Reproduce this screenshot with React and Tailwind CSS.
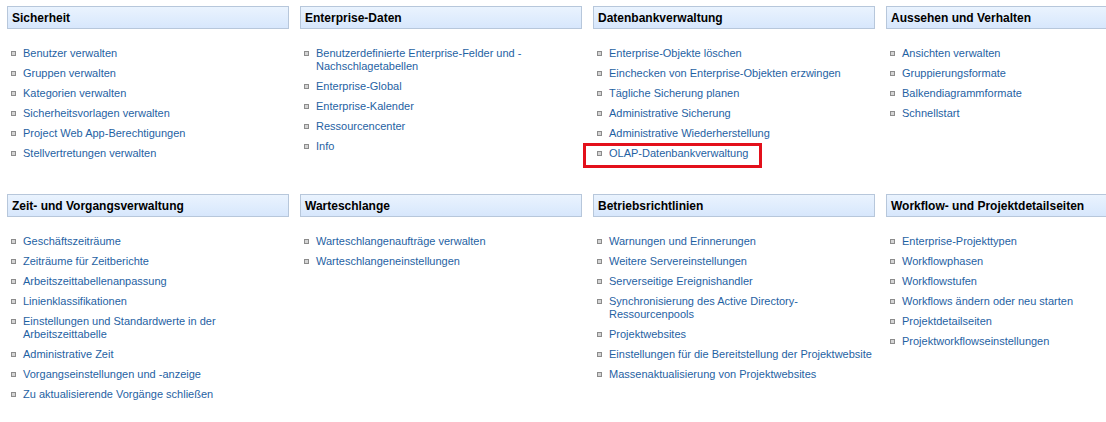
import React from "react";

const sections = [
  {
    title: "Sicherheit",
    items: [
      "Benutzer verwalten",
      "Gruppen verwalten",
      "Kategorien verwalten",
      "Sicherheitsvorlagen verwalten",
      "Project Web App-Berechtigungen",
      "Stellvertretungen verwalten",
    ],
  },
  {
    title: "Enterprise-Daten",
    items: [
      ["Benutzerdefinierte Enterprise-Felder und -", "Nachschlagetabellen"],
      "Enterprise-Global",
      "Enterprise-Kalender",
      "Ressourcencenter",
      "Info",
    ],
  },
  {
    title: "Datenbankverwaltung",
    items: [
      "Enterprise-Objekte löschen",
      "Einchecken von Enterprise-Objekten erzwingen",
      "Tägliche Sicherung planen",
      "Administrative Sicherung",
      "Administrative Wiederherstellung",
      { text: "OLAP-Datenbankverwaltung", marked: true },
    ],
  },
  {
    title: "Aussehen und Verhalten",
    items: ["Ansichten verwalten", "Gruppierungsformate", "Balkendiagrammformate", "Schnellstart"],
  },
  {
    title: "Zeit- und Vorgangsverwaltung",
    items: [
      "Geschäftszeiträume",
      "Zeiträume für Zeitberichte",
      "Arbeitszeittabellenanpassung",
      "Linienklassifikationen",
      ["Einstellungen und Standardwerte in der", "Arbeitszeittabelle"],
      "Administrative Zeit",
      "Vorgangseinstellungen und -anzeige",
      "Zu aktualisierende Vorgänge schließen",
    ],
  },
  {
    title: "Warteschlange",
    items: ["Warteschlangenaufträge verwalten", "Warteschlangeneinstellungen"],
  },
  {
    title: "Betriebsrichtlinien",
    items: [
      "Warnungen und Erinnerungen",
      "Weitere Servereinstellungen",
      "Serverseitige Ereignishandler",
      ["Synchronisierung des Active Directory-", "Ressourcenpools"],
      "Projektwebsites",
      "Einstellungen für die Bereitstellung der Projektwebsite",
      "Massenaktualisierung von Projektwebsites",
    ],
  },
  {
    title: "Workflow- und Projektdetailseiten",
    items: [
      "Enterprise-Projekttypen",
      "Workflowphasen",
      "Workflowstufen",
      "Workflows ändern oder neu starten",
      "Projektdetailseiten",
      "Projektworkflowseinstellungen",
    ],
  },
];

function Item({ item }) {
  let lines;
  let marked = false;
  if (typeof item === "string") lines = [item];
  else if (Array.isArray(item)) lines = item;
  else {
    lines = [item.text];
    marked = item.marked;
  }
  return (
    <li className="relative flex items-start">
      <span className="mt-[4px] ml-[4px] mr-[7px] w-[5px] h-[5px] shrink-0 border border-[#8c8c8c] bg-[#d4d4d4]" />
      <span className="text-[#1f62a3] text-[11px] leading-[13px]">
        {lines.map((l, i) => (
          <span key={i} className="block whitespace-nowrap">
            {l}
          </span>
        ))}
      </span>
      {marked && (
        <span className="absolute left-[-10px] top-[-4px] w-[179px] h-[25px] border-[3px] border-[#e3101b]" />
      )}
    </li>
  );
}

function Section({ s }) {
  return (
    <div className="w-[282px]">
      <div className="h-[23px] border border-[#b7c7db] bg-gradient-to-b from-[#eaf3fe] to-[#d7e7fc] pl-[4px] flex items-center">
        <span className="font-bold text-[12px] text-black whitespace-nowrap">{s.title}</span>
      </div>
      <ul className="mt-[18px] flex flex-col gap-[7px]">
        {s.items.map((it, i) => (
          <Item key={i} item={it} />
        ))}
      </ul>
    </div>
  );
}

export default function App() {
  return (
    <div
      className="w-[1106px] h-[422px] overflow-hidden bg-white"
      style={{ fontFamily: '"Liberation Sans", Arial, sans-serif' }}
    >
      <div className="grid grid-cols-[282px_282px_282px_282px] gap-x-[11px] gap-y-[34px] pl-[7px] pt-[6px] w-[1200px]">
        {sections.map((s, i) => (
          <Section key={i} s={s} />
        ))}
      </div>
    </div>
  );
}
